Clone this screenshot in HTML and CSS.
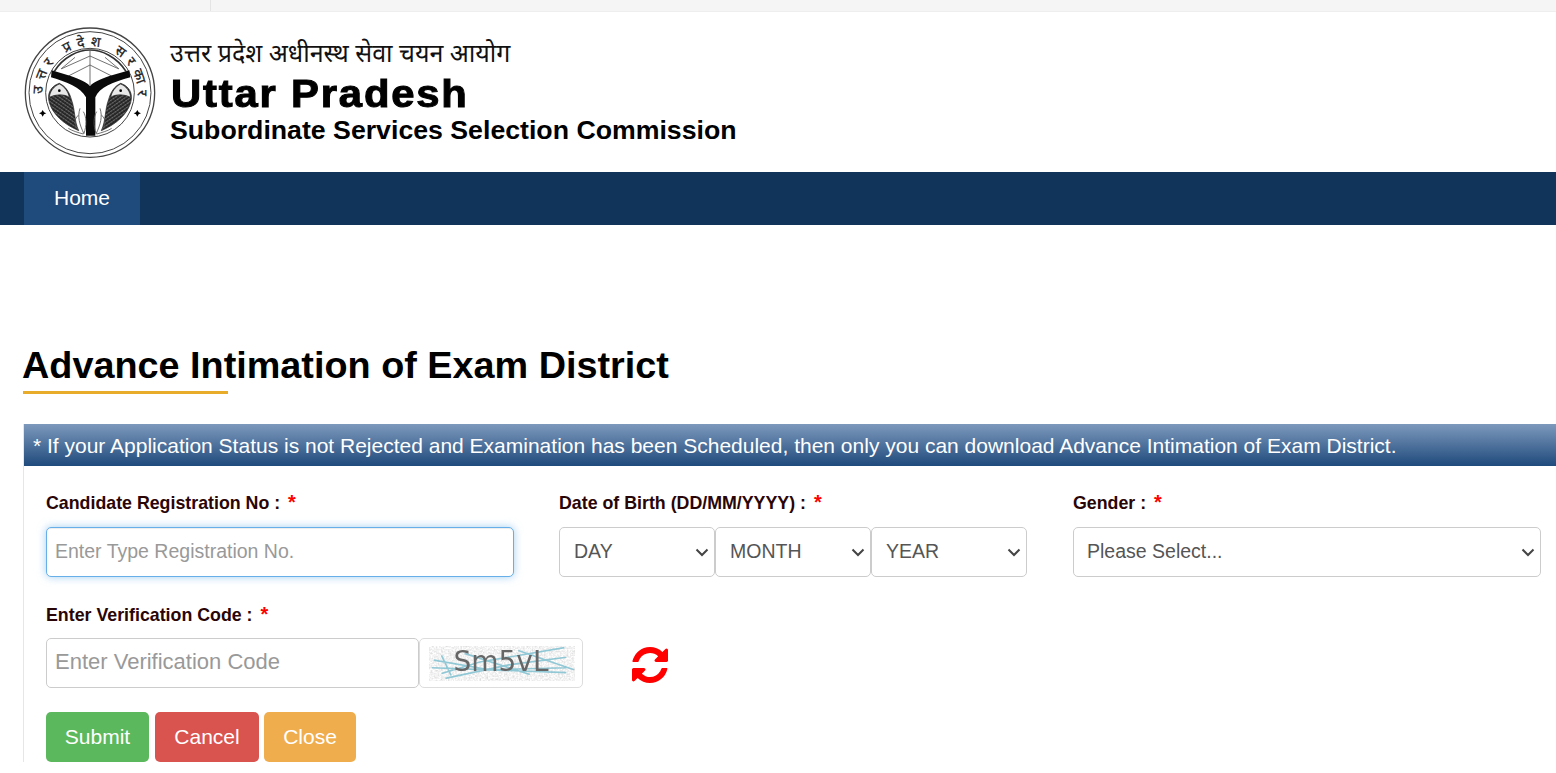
FILE: index.html
```html
<!DOCTYPE html>
<html lang="en">
<head>
<meta charset="utf-8">
<title>Advance Intimation of Exam District</title>
<link rel="stylesheet" href="styles.css">
</head>
<body>
<div class="topbar"><div class="topbar-cell"></div></div>
<header class="brand">
  <svg class="emblem" viewBox="72 78 399 399" aria-hidden="true">
    <defs>
      <path id="arc" d="M127 282A143 143 0 1 1 413 282"/>
      <pattern id="scales" width="9" height="9" patternUnits="userSpaceOnUse" patternTransform="rotate(35)">
        <rect width="9" height="9" fill="#222"/>
        <path d="M0 4.5A4.5 4.5 0 0 1 9 4.5" fill="none" stroke="#bbb" stroke-width="1.6"/>
      </pattern>
      <g id="fish">
        <path class="fish" d="M178 250C152 258 140 282 148 308C158 342 190 372 236 392C222 362 226 330 214 298C208 276 196 258 178 250Z"/>
        <path class="fish-head" d="M178 252C160 260 150 274 148 292C168 282 194 282 208 292C204 274 194 260 178 252Z"/>
        <circle cx="178" cy="272" r="4"/>
        <path class="bow thinb" d="M240 325C232 350 238 372 252 402M250 335C260 350 260 378 252 400M236 345C222 355 222 375 236 392M205 385C215 392 235 398 250 402"/>
      </g>
    </defs>
    <circle cx="270" cy="278" r="194" class="ring"/>
    <circle cx="270" cy="278" r="183" class="ring thin"/>
    <circle cx="270" cy="278" r="133" class="ring thin"/>
    <text class="emblem-text"><textPath href="#arc" startOffset="0" textLength="455" lengthAdjust="spacing">उत्तर प्रदेश सरकार</textPath></text>
    <path class="bow" d="M163 214C190 170 235 150 270 150C305 150 350 170 378 214"/>
    <path class="bow thinb" d="M183 207L225 172M357 207L315 172M185 206L270 168L355 206M270 150V255M205 228L270 195L335 228"/>
    <path class="yoke" d="M155 211L212 228C240 238 262 248 270 258C278 248 300 238 328 228L388 211L391 232C340 246 298 262 286 292L286 407H258V292C242 262 200 246 153 232Z"/>
    <use href="#fish"/>
    <use href="#fish" transform="matrix(-1 0 0 1 540 0)"/>
    <path d="M128 330l4 7 7 3-7 3-4 7-4-7-7-3 7-3zM412 330l4 7 7 3-7 3-4 7-4-7-7-3 7-3z"/>
  </svg>
  <div class="brand-text">
    <div class="brand-hindi">उत्तर प्रदेश अधीनस्थ सेवा चयन आयोग</div>
    <div class="brand-state"><span class="brand-state-text">Uttar Pradesh</span></div>
    <div class="brand-sub">Subordinate Services Selection Commission</div>
  </div>
</header>
<nav class="nav"><a class="nav-item" href="#">Home</a></nav>
<main class="content">
  <h1 class="title">Advance Intimation of Exam District</h1>
  <section class="panel">
    <div class="panel-head">* If your Application Status is not Rejected and Examination has been Scheduled, then only you can download Advance Intimation of Exam District.</div>
    <form class="panel-body">
      <div class="grid">
        <div class="field">
          <label class="label">Candidate Registration No : <span class="req">*</span></label>
          <input class="control focus" type="text" placeholder="Enter Type Registration No.">
        </div>
        <div class="field">
          <label class="label">Date of Birth (DD/MM/YYYY) : <span class="req">*</span></label>
          <div class="dob">
            <select class="control select"><option>DAY</option></select>
            <select class="control select"><option>MONTH</option></select>
            <select class="control select"><option>YEAR</option></select>
          </div>
        </div>
        <div class="field">
          <label class="label">Gender : <span class="req">*</span></label>
          <select class="control select select-wide"><option>Please Select...</option></select>
        </div>
      </div>
      <div class="field code-field">
        <label class="label">Enter Verification Code : <span class="req">*</span></label>
        <div class="code-row">
          <input class="control code-input" type="text" placeholder="Enter Verification Code">
          <div class="captcha">
            <svg class="captcha-noise" viewBox="0 0 164 50" aria-hidden="true">
              <defs>
                <filter id="speckle" x="0" y="0" width="100%" height="100%">
                  <feTurbulence type="fractalNoise" baseFrequency="0.55" numOctaves="2" seed="4"/>
                  <feColorMatrix type="matrix" values="0 0 0 0 0.68  0 0 0 0 0.68  0 0 0 0 0.68  1.6 0 0 0 -0.5"/>
                </filter>
              </defs>
              <rect x="7" y="8" width="152" height="35" filter="url(#speckle)"/>
              <path d="M20 36L60 24L148 9M12 22L70 32L150 30M24 41L90 27L150 19M44 15L112 37M10 30L150 35M20 17L30 38M100 12L158 32" stroke="#7fc0d0" stroke-width="1.7" fill="none" opacity=".85"/>
            </svg>
            <span class="captcha-text">Sm5vL</span>
          </div>
          <a class="refresh" href="#" aria-label="Refresh">
            <svg viewBox="0 0 1792 1792" width="42" height="42"><path fill="#f00" d="M1639 1056q0 5-1 7-64 268-268 434.5t-478 166.5q-146 0-282.5-55t-243.5-157l-129 129q-19 19-45 19t-45-19-19-45v-448q0-26 19-45t45-19h448q26 0 45 19t19 45-19 45l-137 137q71 66 161 102t187 36q134 0 250-65t186-179q11-17 53-117 8-23 30-23h192q13 0 22.5 9.5t9.5 22.5zm25-800v448q0 26-19 45t-45 19h-448q-26 0-45-19t-19-45 19-45l138-138q-148-137-349-137-134 0-250 65t-186 179q-11 17-53 117-8 23-30 23h-199q-13 0-22.5-9.5t-9.5-22.5v-7q65-268 270-434.5t480-166.5q146 0 284 55.5t245 156.5l130-129q19-19 45-19t45 19 19 45z"/></svg>
          </a>
        </div>
      </div>
      <div class="actions">
        <button class="btn green" type="button">Submit</button>
        <button class="btn red" type="button">Cancel</button>
        <button class="btn orange" type="button">Close</button>
      </div>
    </form>
  </section>
</main>
</body>
</html>
```

FILE: styles.css
```css
* { box-sizing: border-box; }
html, body { margin: 0; height: 100%; overflow: hidden; }
body { background: #fff; color: #000; font-family: "Liberation Sans", Arial, sans-serif; }

.topbar { height: 12px; background: #f5f5f5; border-bottom: 1px solid #eeeeee; }
.topbar-cell { width: 211px; height: 11px; border-right: 1px solid #e4e4e4; }

.brand { height: 160px; display: flex; align-items: flex-start; padding: 14px 0 0 24px; }
.emblem { width: 133px; height: 133px; flex: none; }
.ring { fill: none; stroke: #444; stroke-width: 4; }
.ring.thin { stroke-width: 3; }
.emblem-text { font: 400 42px "Noto Sans", "Liberation Sans", sans-serif; fill: #222; stroke: #222; stroke-width: .8; }
.bow { fill: none; stroke: #333; stroke-width: 5; }
.bow.thinb { stroke-width: 2.5; stroke: #555; }
.yoke { fill: #0a0a0a; }
.fish { fill: url(#scales); stroke: #222; stroke-width: 2; }
.fish-head { fill: #e8e8e8; stroke: #222; stroke-width: 2; }

.brand-text { margin-left: 13px; padding-top: 10px; color: #000; }
.brand-hindi { font: 400 25px/32px "Noto Sans", "Liberation Serif", serif; height: 32px; color: #111; }
.brand-state { height: 43px; margin-top: 4px; padding-left: 1px; white-space: nowrap; }
.brand-state-text { display: inline-block; font-weight: 700; font-size: 38px; line-height: 44px; letter-spacing: 1.65px; transform: scaleX(1.1); transform-origin: left center; -webkit-text-stroke: 1px #000; }
.brand-sub { font-weight: 700; font-size: 26.7px; line-height: 30px; }

.nav { height: 53px; background: #11345a; padding-left: 24px; display: flex; }
.nav-item { width: 116px; background: #1f4a7c; color: #fff; font-size: 21px; line-height: 52px; text-align: center; text-decoration: none; }

.content { padding: 117px 0 0 23px; }
.title { position: relative; margin: 0 0 30px; font-size: 37.8px; line-height: 47px; font-weight: 700; color: #000; height: 52px; text-indent: -1px; }
.title::after { content: ""; position: absolute; left: 0; bottom: 0; width: 205px; height: 3px; background: #e9ac2a; }

.panel { border-left: 1px solid #e6e6e6; }
.panel-head { height: 42px; padding-left: 9px; font-size: 21px; line-height: 44px; color: #fff; white-space: nowrap; background: linear-gradient(#7d99bc, #1f4a7c); }
.panel-body { padding: 24px 15px 0 22px; }
.grid { display: grid; grid-template-columns: 513px 514px 468px; }
.field { display: flex; flex-direction: column; }
.grid .focus { width: 468px; }
.label { font-size: 17.8px; font-weight: 700; line-height: 24px; color: #2a0505; margin-bottom: 12px; height: 25px; }
.req { color: #f00; font-size: 20px; margin-left: 3px; }
.control { height: 50px; border: 1px solid #ccc; border-radius: 5px; background: #fff; font: 19.5px "Liberation Sans", sans-serif; color: #555; padding: 0 8px 2px; outline: none; }
.control::placeholder { color: #999; opacity: 1; }
.focus { border-color: #66afe9; box-shadow: inset 0 1px 1px rgba(0,0,0,.075), 0 0 8px rgba(102,175,233,.6); }
.select { appearance: none; -webkit-appearance: none; width: 100%; padding: 0 14px 2px; background: #fff url("data:image/svg+xml,%3Csvg xmlns='http://www.w3.org/2000/svg' width='14' height='9' viewBox='0 0 14 9'%3E%3Cpath d='M1.5 1.5L7 7l5.5-5.5' fill='none' stroke='%23444' stroke-width='2'/%3E%3C/svg%3E") no-repeat right 5px center; }
.select-wide { padding-left: 13px; }
.dob { display: grid; grid-template-columns: repeat(3, 156px); }
.code-field { margin-top: 25px; }
.code-field .label { margin-bottom: 11px; }
.code-row { display: flex; align-items: center; }
.code-input { width: 373px; font-size: 22px; padding-bottom: 3px; }
.captcha { position: relative; width: 164px; height: 50px; border: 1px solid #ddd; border-radius: 5px; display: flex; align-items: center; justify-content: center; overflow: hidden; padding-bottom: 3px; }
.captcha-noise { position: absolute; inset: 0; width: 100%; height: 100%; }
.captcha-text { position: relative; font: 28px "DejaVu Sans", sans-serif; color: #666; filter: blur(.6px); }
.refresh { margin: 3px 0 0 46px; display: block; height: 42px; }
.actions { display: flex; margin-top: 24px; gap: 6px; }
.btn { height: 50px; border: 1px solid transparent; border-radius: 5px; color: #fff; font: 21px "Liberation Sans", sans-serif; padding: 0; }
.green { width: 103px; background: #5cb85c; }
.red { width: 104px; background: #d9534f; }
.orange { width: 92px; background: #f0ad4e; margin-left: -1px; }
```
